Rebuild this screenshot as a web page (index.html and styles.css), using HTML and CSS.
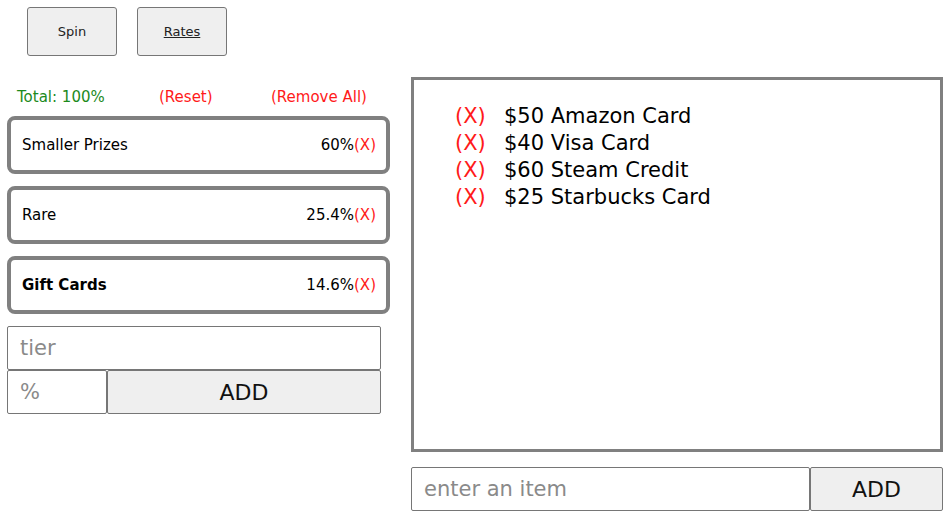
FILE: index.html
```html
<!DOCTYPE html>
<html>
<head>
<meta charset="utf-8">
<link rel="stylesheet" href="styles.css">
</head>
<body>
<div class="top">
  <button class="tbtn">Spin</button>
  <button class="tbtn"><u>Rates</u></button>
</div>
<div class="main">
  <div class="left">
    <div class="totals">
      <span class="green">Total: 100%</span>
      <span class="red">(Reset)</span>
      <span class="red">(Remove All)</span>
    </div>
    <div class="card"><span>Smaller Prizes</span><span>60%<span class="red">(X)</span></span></div>
    <div class="card"><span>Rare</span><span>25.4%<span class="red">(X)</span></span></div>
    <div class="card"><span class="bold">Gift Cards</span><span>14.6%<span class="red">(X)</span></span></div>
    <div class="form">
      <input class="inp tier" placeholder="tier">
      <div class="row">
        <input class="inp pct" placeholder="%">
        <button class="add">ADD</button>
      </div>
    </div>
  </div>
  <div class="right">
    <div class="box">
      <div class="item"><span class="red x">(X)</span><span>$50 Amazon Card</span></div>
      <div class="item"><span class="red x">(X)</span><span>$40 Visa Card</span></div>
      <div class="item"><span class="red x">(X)</span><span>$60 Steam Credit</span></div>
      <div class="item"><span class="red x">(X)</span><span>$25 Starbucks Card</span></div>
    </div>
    <div class="row2">
      <input class="inp itemin" placeholder="enter an item">
      <button class="add add2">ADD</button>
    </div>
  </div>
</div>
</body>
</html>
```
FILE: styles.css
```css
* { box-sizing: border-box; }
body {
  margin: 0;
  font-family: "DejaVu Sans", sans-serif;
  color: #000;
  background: #fff;
}
.top {
  display: flex;
  gap: 20px;
  padding: 7px 0 0 27px;
}
.tbtn {
  width: 90px;
  height: 49px;
  background: #efefef;
  border: 1px solid #767676;
  border-radius: 3px;
  font-family: inherit;
  font-size: 13px;
  color: #222;
}
.main {
  display: flex;
  padding-left: 7px;
  margin-top: 21px;
}
.left {
  width: 383px;
  margin-top: 11px;
}
.totals {
  display: grid;
  grid-template-columns: 142px 112px auto;
  padding-left: 10px;
  font-size: 15px;
  height: 18px;
  align-items: center;
}
.green { color: #1c8a1c; }
.red { color: #ff1a1a; }
.card {
  margin-top: 12px;
  height: 58px;
  border: 4px solid #808080;
  border-radius: 8px;
  display: flex;
  justify-content: space-between;
  align-items: center;
  padding: 0 10px 0 11px;
  font-size: 15px;
}
.totals + .card { margin-top: 10px; }
.bold { font-weight: bold; }
.form { margin-top: 12px; width: 374px; }
.inp {
  height: 44px;
  border: 1px solid #767676;
  border-radius: 2px;
  font-family: inherit;
  font-size: 21px;
  padding: 0 12px;
  outline: none;
}
.inp::placeholder { color: #8a8a8a; }
.tier { width: 374px; display: block; }
.row { display: flex; }
.pct { width: 100px; }
.add {
  flex: 1;
  height: 44px;
  background: #efefef;
  border: 1px solid #767676;
  border-radius: 2px;
  font-family: inherit;
  font-size: 22px;
  color: #111;
}
.right {
  margin-left: 21px;
  width: 532px;
}
.box {
  height: 375px;
  border: 3px solid #808080;
  padding: 22px 0 0 41px;
  font-size: 21px;
}
.item {
  display: flex;
  height: 27px;
  align-items: center;
}
.x { width: 49px; }
.row2 { display: flex; margin-top: 15px; }
.itemin { width: 399px; }
.add2 { flex: none; width: 133px; }
```
